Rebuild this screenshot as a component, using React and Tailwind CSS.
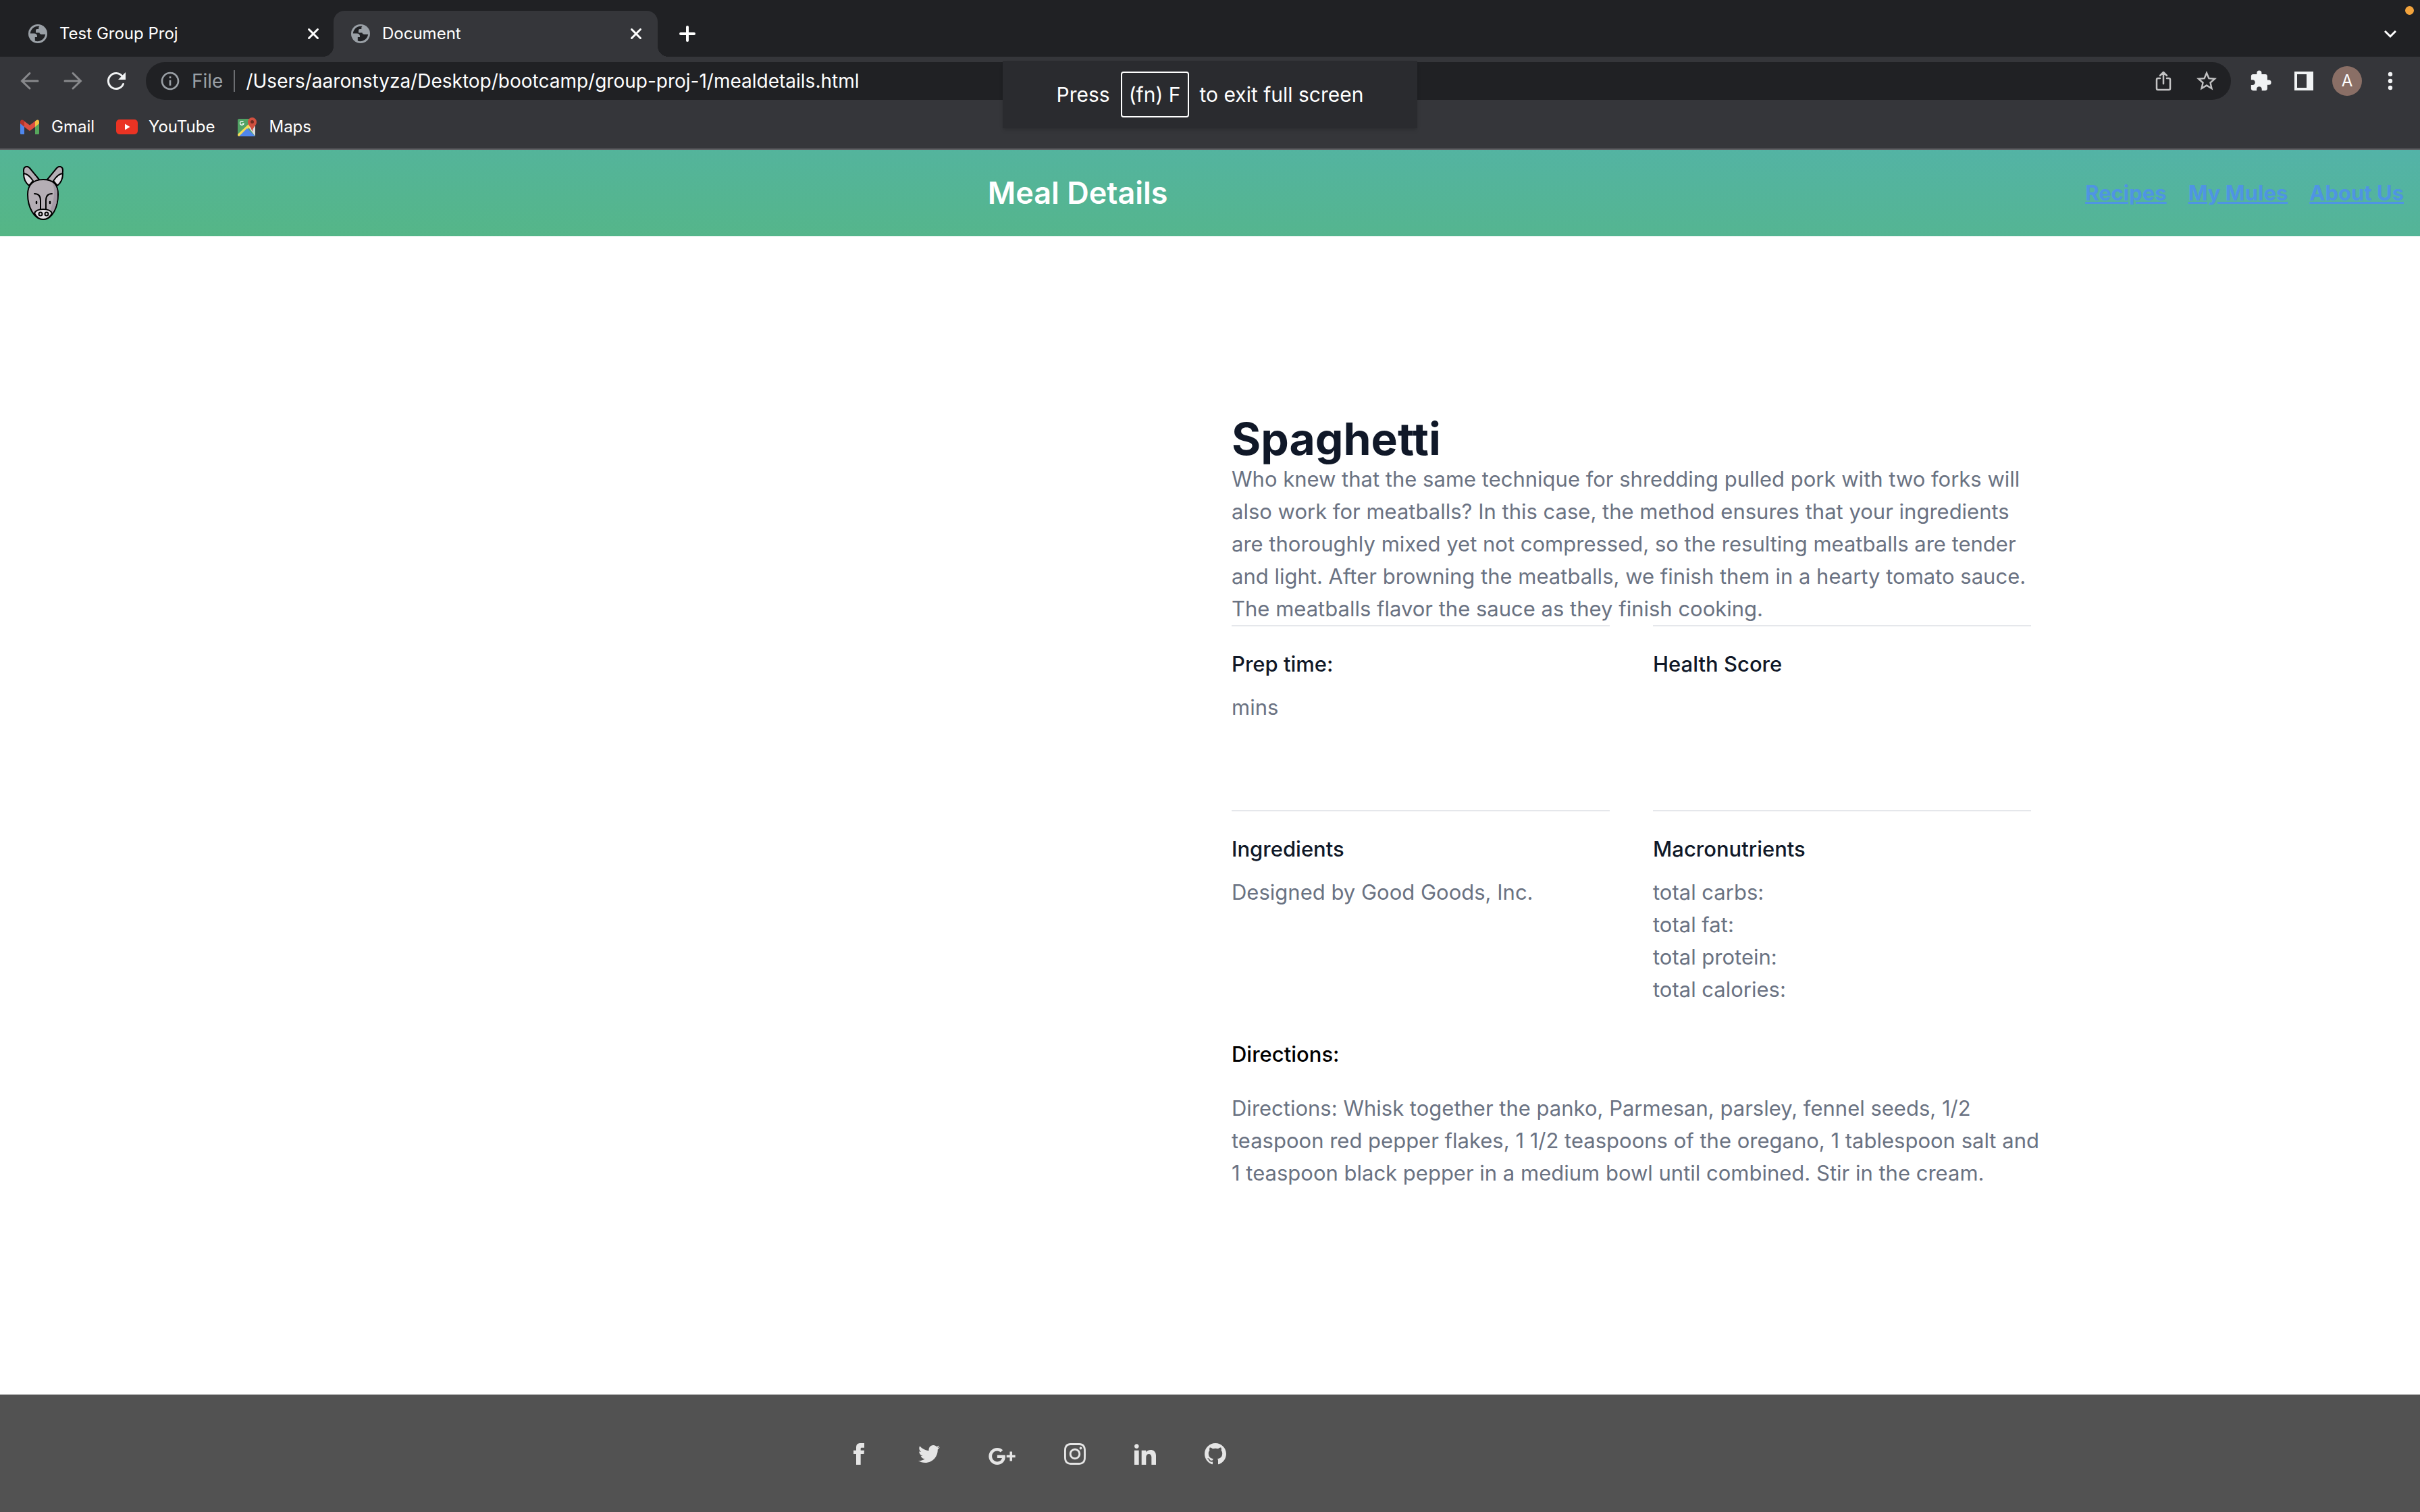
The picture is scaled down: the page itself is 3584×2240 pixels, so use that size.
import React from "react";
import { MdExtension, MdInfoOutline, MdStarBorder } from "react-icons/md";

function Globe() {
  return (
    <svg viewBox="0 0 28 28" className="size-7" aria-hidden="true">
      <circle cx="14" cy="14" r="14" fill="#9aa0a6" />
      <path d="M16.500 3C9.500 2 3.500 7 2.800 13.500H8.500C11 13.500 13 15 13 17.300V19H9.800V24.500C16 27 24 22.500 25.200 15H21C18.500 15 16.500 14.500 16.500 12.500H11V9C11 7.500 12 7 13.800 7H15.300V5C15.300 4 16 3.500 16.500 3Z" fill="#202124" />
    </svg>
  );
}

function Tab({ title, active }) {
  return (
    <div className={active ? "relative flex h-[68px] w-[480px] items-center rounded-t-[16px] bg-[#35363a] pr-[20px] pl-[26px]" : "flex h-[68px] w-[478px] items-center pr-[18px] pl-[26px]"}>
      {active && (
        <>
          <span className="absolute bottom-0 -left-4 size-4 bg-[radial-gradient(circle_at_0_0,transparent_16px,#35363a_16px)]" />
          <span className="absolute -right-4 bottom-0 size-4 bg-[radial-gradient(circle_at_100%_0,transparent_16px,#35363a_16px)]" />
        </>
      )}
      <Globe />
      <span className="ml-[18px] flex-1 text-[24px] leading-8">{title}</span>
      <button aria-label="Close tab">
        <svg viewBox="0 0 24 24" className="size-6" fill="none" stroke="#fff" strokeWidth="3" strokeLinecap="round"><path d="M5.500 5.500L18.500 18.500M18.500 5.500L5.500 18.500" /></svg>
      </button>
    </div>
  );
}

function ToolButton({ label, children, dim }) {
  return (
    <button aria-label={label} className={dim ? "flex h-14 w-16 shrink-0 items-center justify-center text-[#88898c]" : "flex h-14 w-16 shrink-0 items-center justify-center text-[#f1f3f4]"}>
      {children}
    </button>
  );
}

function BrowserChrome() {
  return (
    <div className="relative border-b-2 border-[#5f6063] bg-[#35363a] text-white">
      <div className="flex h-[84px] items-end bg-[#202124] pr-3 pl-4">
        <Tab title="Test Group Proj" />
        <Tab title="Document" active />
        <button aria-label="New tab" className="ml-7 flex h-[68px] w-8 items-center justify-center">
          <svg viewBox="0 0 32 32" className="size-8" stroke="#fff" strokeWidth="4" strokeLinecap="round"><path d="M16 6V26M6 16H26" /></svg>
        </button>
        <button aria-label="Search tabs" className="ml-auto flex h-[68px] w-16 items-center justify-center">
          <svg viewBox="0 0 32 32" className="size-8" fill="none" stroke="#fff" strokeWidth="3"><path d="M8 12L16 20L24 12" /></svg>
        </button>
      </div>
      <span className="absolute top-[9px] right-[9px] size-[13px] rounded-full bg-[#f2a33c]" />

      <div className="flex h-[72px] items-center px-3">
        <ToolButton label="Back" dim>
          <svg viewBox="0 0 32 32" className="size-8" fill="none" stroke="currentColor" strokeWidth="3" strokeLinecap="round"><path d="M28 16H5M16 4.500L4.500 16L16 27" /></svg>
        </ToolButton>
        <ToolButton label="Forward" dim>
          <svg viewBox="0 0 32 32" className="size-8" fill="none" stroke="currentColor" strokeWidth="3" strokeLinecap="round"><path d="M4 16H27M16 4.500L27.500 16L16 27" /></svg>
        </ToolButton>
        <ToolButton label="Reload">
          <svg viewBox="0 0 32 32" className="size-8" fill="none" stroke="currentColor" strokeWidth="3" strokeLinecap="round"><path d="M26.500 20.500A11.500 11.500 0 1 1 25 9" /><path d="M30 3V14H19Z" fill="currentColor" stroke="none" /></svg>
        </ToolButton>
        <div className="ml-3 flex h-14 min-w-0 flex-1 items-center rounded-full bg-[#202124] pr-1 pl-5">
          <MdInfoOutline className="size-8 text-[#9aa0a6]" />
          <span className="ml-4 text-[28px] text-[#9aa0a6]">File</span>
          <span className="ml-4 h-8 w-0.5 bg-[#6c6e72]" />
          <input aria-label="Address" readOnly defaultValue="/Users/aaronstyza/Desktop/bootcamp/group-proj-1/mealdetails.html" className="ml-4 min-w-0 flex-1 bg-transparent text-[28px] outline-none" />
          <button aria-label="Share" className="flex w-16 justify-center text-[#c3c3c4]">
            <svg viewBox="0 0 32 32" className="size-8" fill="none" stroke="currentColor" strokeWidth="2.500" strokeLinecap="round" strokeLinejoin="round"><path d="M11 12H8a2 2 0 0 0-2 2V27a2 2 0 0 0 2 2H24a2 2 0 0 0 2-2V14a2 2 0 0 0-2-2H21M16 20V4M11 8L16 3L21 8" /></svg>
          </button>
          <button aria-label="Bookmark" className="flex w-16 justify-center text-[#c3c3c4]"><MdStarBorder className="size-9" /></button>
        </div>
        <div className="ml-3 flex items-center">
          <ToolButton label="Extensions"><MdExtension className="size-[34px]" /></ToolButton>
          <ToolButton label="Side panel">
            <svg viewBox="0 0 28 28" className="size-7" fill="currentColor"><path fillRule="evenodd" d="M0 0H28V28H0ZM4 4V24H18V4Z" /></svg>
          </ToolButton>
          <ToolButton label="Profile"><span className="flex size-11 items-center justify-center rounded-full bg-[#8a6f66] text-[24px] text-white">A</span></ToolButton>
          <ToolButton label="Menu">
            <svg viewBox="0 0 28 28" className="size-7" fill="currentColor"><circle cx="14" cy="4" r="3.200" /><circle cx="14" cy="14" r="3.200" /><circle cx="14" cy="24" r="3.200" /></svg>
          </ToolButton>
        </div>
      </div>

      <nav aria-label="Bookmarks" className="flex h-16 items-center gap-8 pl-7 text-[24px] leading-8">
        <a href="#gmail" className="flex items-center gap-4">
          <svg viewBox="0 0 32 32" className="size-8">
            <path d="M2 9V25.500A1.500 1.500 0 0 0 3.500 27H8V12Z" fill="#4f87ee" />
            <path d="M30 9V25.500A1.500 1.500 0 0 1 28.500 27H24V12Z" fill="#56a75c" />
            <path d="M24 7.500L26 6C28 4.500 30 6 30 8.500V11L24 16Z" fill="#f5bf42" />
            <path d="M2 8.500C2 6 4.500 4.500 6.500 6L8 7.500V16L2 11Z" fill="#b6352c" />
            <path d="M8 7.500L16 13.500L24 7.500V16L16 22L8 16Z" fill="#dc4f42" />
          </svg>
          Gmail
        </a>
        <a href="#youtube" className="flex items-center gap-4">
          <svg viewBox="0 0 32 32" className="size-8"><rect y="5" width="32" height="22" rx="5" fill="#ea3323" /><path d="M13 11.500V20.500L20.500 16Z" fill="#fff" /></svg>
          YouTube
        </a>
        <a href="#maps" className="flex items-center gap-4">
          <svg viewBox="0 0 32 32" className="size-8">
            <clipPath id="map"><rect x="2" y="4" width="26" height="26" rx="2" /></clipPath>
            <g clipPath="url(#map)">
              <rect x="2" y="4" width="26" height="26" fill="#52a365" />
              <path d="M17 15H28V30Z" fill="#dcdcdc" />
              <path d="M18 12L21 15L5 31L1 28Z" fill="#f7dc55" />
              <path d="M16 18L28 30H4Z" fill="#5086ec" />
              <path d="M10.500 8.700A2.800 2.800 0 1 0 11 11.200H8.800" fill="none" stroke="#fff" strokeWidth="1.300" />
            </g>
            <path d="M23.500 2A6.500 6.500 0 0 0 17 8.500C17 14 22 15.500 23.500 23C25 15.500 30 14 30 8.500A6.500 6.500 0 0 0 23.500 2Z" fill="#d0503f" />
            <circle cx="23.500" cy="8.500" r="2.500" fill="#722c22" />
          </svg>
          Maps
        </a>
      </nav>

      <div role="status" className="absolute top-[90px] left-1/2 flex h-[100px] w-[614px] -translate-x-1/2 items-center justify-center gap-4 bg-[#2a2b2f] text-[30px] shadow-md">
        <span>Press</span>
        <kbd className="flex h-[68px] items-center rounded-[4px] border-2 border-white px-[10px] font-[inherit]">(fn) F</kbd>
        <span>to exit full screen</span>
      </div>
    </div>
  );
}

function Mule() {
  return (
    <svg viewBox="0 0 80 80" className="size-20" fill="none" stroke="#000" strokeWidth="2" strokeLinecap="round" strokeLinejoin="round" role="img" aria-label="Mule">
      <path d="M19 28C14 22 11 13 11 6C11 1 16 -1 20 3L34 20Z" fill="#b5aeb5" />
      <path d="M61 28C66 22 69 13 69 6C69 1 64 -1 60 3L46 20Z" fill="#b5aeb5" />
      <path d="M11 11C11 18 14 25 19 29L25 22C21 16 17 11 11 11Z" fill="#e1dee3" />
      <path d="M69 11C69 18 66 25 61 29L55 22C59 16 63 11 69 11Z" fill="#e1dee3" />
      <path d="M40 20C25 20 17 28 17 42C17 60 26 79 40 79C54 79 62 60 62 42C62 28 55 20 40 20Z" fill="#b5aeb5" />
      <path d="M53 24C58 32 57 48 51 64L54 69C59 61 61 50 61 41C61 33 58 27 53 24Z" fill="#a399a5" stroke="none" />
      <path d="M27 70C29 65 34 64 40 64S51 65 53 70C50 76 45 79 40 79S30 76 27 70Z" fill="#e1dee3" />
      <path d="M27 41C34 41 36 45 36 51V64M53 41C46 41 44 45 44 51V64" />
      <path d="M30 53V55M50 53V55" strokeWidth="2.500" />
      <circle cx="36" cy="71" r="2.500" />
      <circle cx="45" cy="71" r="2.500" />
    </svg>
  );
}

const links = ["Recipes", "My Mules", "About Us"];

const social = [
  { name: "Facebook", box: "0 0 24 24", size: "size-8", d: "M9 8h-3v4h3v12h5v-12h3.642l.358-4h-4v-1.667c0-.955.192-1.333 1.115-1.333h2.885v-5h-3.808c-3.596 0-5.192 1.583-5.192 4.615v3.385z" },
  { name: "Twitter", box: "0 0 24 24", size: "size-8", d: "M24 4.557c-.883.392-1.832.656-2.828.775 1.017-.609 1.798-1.574 2.165-2.724-.951.564-2.005.974-3.127 1.195-.897-.957-2.178-1.555-3.594-1.555-3.179 0-5.515 2.966-4.797 6.045-4.091-.205-7.719-2.165-10.148-5.144-1.29 2.213-.669 5.108 1.523 6.574-.806-.026-1.566-.247-2.229-.616-.054 2.281 1.581 4.415 3.949 4.89-.693.188-1.452.232-2.224.084.626 1.956 2.444 3.379 4.6 3.419-2.07 1.623-4.678 2.348-7.29 2.04 2.179 1.397 4.768 2.212 7.548 2.212 9.142 0 14.307-7.721 13.995-14.646.962-.695 1.797-1.562 2.457-2.549z" },
  { name: "Google Plus", box: "0 4.365 24 15.27", size: "h-[25px] w-10", d: "M7.635 10.909v2.619h4.335c-.173 1.125-1.31 3.295-4.331 3.295-2.604 0-4.731-2.16-4.731-4.823 0-2.662 2.122-4.822 4.728-4.822 1.485 0 2.479.633 3.045 1.178l2.073-1.994c-1.33-1.245-3.056-1.995-5.115-1.995C3.412 4.365 0 7.785 0 12s3.414 7.635 7.635 7.635c4.41 0 7.332-3.098 7.332-7.461 0-.501-.054-.885-.12-1.265H7.635zM19 7.7h2.2v3.200H24v2.200h-2.800v3.200H19v-3.200h-2.900v-2.200H19z" },
  { name: "Instagram", box: "0 0 24 24", size: "size-8", d: "M12 2.163c3.204 0 3.584.012 4.85.07 3.252.148 4.771 1.691 4.919 4.919.058 1.265.069 1.645.069 4.849 0 3.205-.012 3.584-.069 4.849-.149 3.225-1.664 4.771-4.919 4.919-1.266.058-1.644.07-4.85.07-3.204 0-3.584-.012-4.849-.07-3.26-.149-4.771-1.699-4.919-4.92-.058-1.265-.07-1.644-.07-4.849 0-3.204.013-3.583.07-4.849.149-3.227 1.664-4.771 4.919-4.919 1.266-.057 1.645-.069 4.849-.069zm0-2.163c-3.259 0-3.667.014-4.947.072-4.358.2-6.78 2.618-6.98 6.98-.059 1.281-.073 1.689-.073 4.948 0 3.259.014 3.668.072 4.948.2 4.358 2.618 6.78 6.98 6.98 1.281.058 1.689.072 4.948.072 3.259 0 3.668-.014 4.948-.072 4.354-.2 6.782-2.618 6.979-6.98.059-1.28.073-1.689.073-4.948 0-3.259-.014-3.667-.072-4.947-.196-4.354-2.617-6.78-6.979-6.98-1.281-.059-1.69-.073-4.949-.073zm0 5.838c-3.403 0-6.162 2.759-6.162 6.162s2.759 6.163 6.162 6.163 6.162-2.759 6.162-6.163c0-3.403-2.759-6.162-6.162-6.162zm0 10.162c-2.209 0-4-1.79-4-4 0-2.209 1.791-4 4-4s4 1.791 4 4c0 2.21-1.791 4-4 4zm6.406-11.845c-.796 0-1.441.645-1.441 1.44s.645 1.44 1.441 1.44c.795 0 1.439-.645 1.439-1.44s-.644-1.44-1.439-1.44z" },
  { name: "LinkedIn", box: "0 0 24 24", size: "size-8", d: "M4.98 3.5c0 1.381-1.11 2.5-2.48 2.5s-2.48-1.119-2.48-2.5c0-1.38 1.11-2.5 2.48-2.5s2.48 1.12 2.48 2.5zm.02 4.5h-5v16h5v-16zm7.982 0h-4.968v16h4.969v-8.399c0-4.67 6.029-5.052 6.029 0v8.399h4.988v-10.131c0-7.88-8.922-7.593-11.018-3.714v-2.155z" },
  { name: "GitHub", box: "0 0 24 24", size: "size-8", d: "M12 0c-6.626 0-12 5.373-12 12 0 5.302 3.438 9.8 8.207 11.387.599.111.793-.261.793-.577v-2.234c-3.338.726-4.033-1.416-4.033-1.416-.546-1.387-1.333-1.756-1.333-1.756-1.089-.745.083-.729.083-.729 1.205.084 1.839 1.237 1.839 1.237 1.07 1.834 2.807 1.304 3.492.997.107-.775.418-1.305.762-1.604-2.665-.305-5.467-1.334-5.467-5.931 0-1.311.469-2.381 1.236-3.221-.124-.303-.535-1.524.117-3.176 0 0 1.008-.322 3.301 1.23.957-.266 1.983-.399 3.003-.404 1.02.005 2.047.138 3.006.404 2.291-1.552 3.297-1.23 3.297-1.23.653 1.653.242 2.874.118 3.176.77.84 1.235 1.911 1.235 3.221 0 4.609-2.807 5.624-5.479 5.921.43.372.823 1.102.823 2.222v3.293c0 .319.192.694.801.576 4.765-1.589 8.199-6.086 8.199-11.386 0-6.627-5.373-12-12-12z" },
];

const summary = [
  "Who knew that the same technique for shredding pulled pork with two forks will",
  "also work for meatballs? In this case, the method ensures that your ingredients",
  "are thoroughly mixed yet not compressed, so the resulting meatballs are tender",
  "and light. After browning the meatballs, we finish them in a hearty tomato sauce.",
  "The meatballs flavor the sauce as they finish cooking.",
];

const directions = [
  "Directions: Whisk together the panko, Parmesan, parsley, fennel seeds, 1/2",
  "teaspoon red pepper flakes, 1 1/2 teaspoons of the oregano, 1 tablespoon salt and",
  "1 teaspoon black pepper in a medium bowl until combined. Stir in the cream.",
];

const facts = [
  { term: "Prep time:", lines: ["mins"] },
  { term: "Health Score", lines: [] },
  { term: "Ingredients", lines: ["Designed by Good Goods, Inc."] },
  { term: "Macronutrients", lines: ["total carbs:", "total fat:", "total protein:", "total calories:"] },
];

function Lines({ items }) {
  return items.map((line) => <span key={line} className="block whitespace-nowrap">{line}</span>);
}

export default function App() {
  return (
    <div className="flex min-h-screen flex-col bg-white font-['Inter','Liberation_Sans',sans-serif] text-[31px] leading-[48px] text-black">
      <BrowserChrome />
      <header className="flex items-center justify-between bg-[linear-gradient(to_top_right,#55b685,#53b3a8)] p-6">
        <Mule />
        <span className="text-[45px] font-semibold text-white">Meal Details</span>
        <nav className="flex gap-8 font-bold text-[#4f94e3]">
          {links.map((l) => <a key={l} href="#page" className="underline">{l}</a>)}
        </nav>
      </header>

      <main className="mx-auto grid w-full max-w-[2560px] flex-1 grid-cols-2 gap-16 px-16 pt-[264px] pb-16">
        <div className="col-start-2">
          <h1 className="text-[66px] leading-[72px] font-bold text-gray-900">Spaghetti</h1>
          <p className="text-gray-500"><Lines items={summary} /></p>
          <dl className="grid grid-cols-2 gap-x-16 gap-y-32">
            {facts.map((f) => (
              <div key={f.term} className="border-t-2 border-gray-200 pt-8">
                <dt className="font-medium text-gray-900">{f.term}</dt>
                <dd className="mt-4 text-gray-500"><Lines items={f.lines} /></dd>
              </div>
            ))}
          </dl>
          <h2 className="mt-12 font-medium">Directions:</h2>
          <p className="mt-8 text-gray-500"><Lines items={directions} /></p>
        </div>
      </main>

      <footer className="flex h-[174px] items-end justify-center gap-[72px] bg-[#525252] pr-[512px] pb-[70px] text-[#e5e5e5]">
        {social.map((s) => (
          <a key={s.name} href="#social" aria-label={s.name}>
            <svg viewBox={s.box} className={s.size} fill="currentColor"><path d={s.d} /></svg>
          </a>
        ))}
      </footer>
    </div>
  );
}
